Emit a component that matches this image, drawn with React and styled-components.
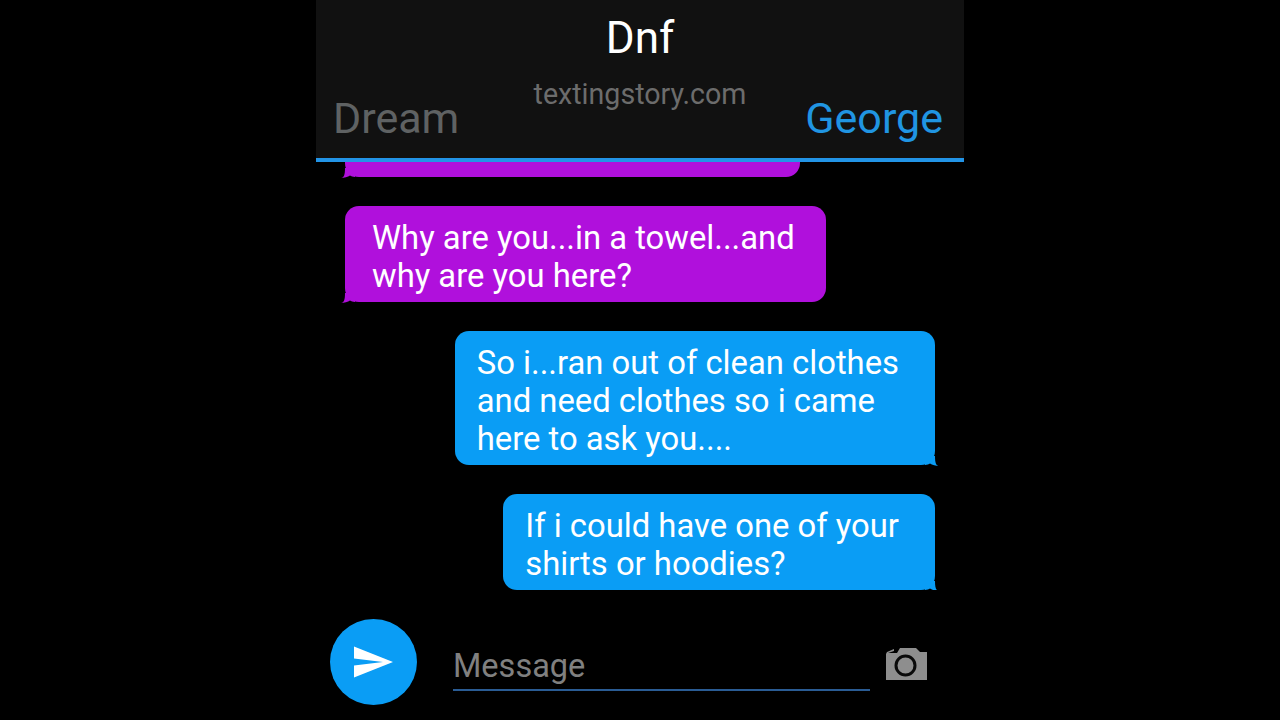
import styled, { createGlobalStyle } from 'styled-components';

const messages = [
  { id: 1, from: 'dream', width: 455, text: '' },
  { id: 2, from: 'dream', text: 'Why are you...in a towel...and\nwhy are you here?' },
  { id: 3, from: 'george', text: 'So i...ran out of clean clothes\nand need clothes so i came\nhere to ask you....' },
  { id: 4, from: 'george', text: 'If i could have one of your\nshirts or hoodies?' },
];

const SendIcon = () => (
  <svg width="41" height="32" viewBox="0 0 41 32">
    <path d="M1 0.500L40 16L1 31.500V19.500L30 16L1 12.500Z" fill="#fff" />
  </svg>
);

const CameraIcon = () => (
  <svg width="44" height="34" viewBox="0 0 44 34">
    <path d="M3 5L10 2V4L4 6H13L16 1H32L36 5H43V33H2V7Z" fill="#8e8e8e" />
    <circle cx="21.500" cy="18.500" r="9.500" fill="#8e8e8e" stroke="#0a0a0a" strokeWidth="3" />
  </svg>
);

const Tail = ({ side, color }) => (
  <TailShape $side={side} width="14" height="10" viewBox="0 0 14 10" fill={color}>
    <path
      d={
        side === 'left'
          ? 'M0 10C3 9.500 4 7 4 0H14V9C12 9 10 8 9 7.500C7 9 3 10 0 10Z'
          : 'M14 10C11 9.500 10 7 10 0H0V9C2 9 4 8 5 7.500C7 9 11 10 14 10Z'
      }
    />
  </TailShape>
);

const bubbleColors = { dream: '#b010dc', george: '#0a9df5' };

export default function App() {
  return (
    <>
      <GlobalStyle />
      <Phone>
        <Header>
          <Title>Dnf</Title>
          <Participants>
            <Name>Dream</Name>
            <Site>textingstory.com</Site>
            <Name $active>George</Name>
          </Participants>
        </Header>
        <Thread>
          {messages.map((m) => (
            <Bubble key={m.id} $from={m.from} style={m.width ? { width: m.width } : undefined}>
              {m.text}
              <Tail side={m.from === 'dream' ? 'left' : 'right'} color={bubbleColors[m.from]} />
            </Bubble>
          ))}
        </Thread>
        <Composer>
          <SendButton>
            <SendIcon />
          </SendButton>
          <MessageField>Message</MessageField>
          <CameraButton>
            <CameraIcon />
          </CameraButton>
        </Composer>
      </Phone>
    </>
  );
}

const GlobalStyle = createGlobalStyle`
  html, body {
    margin: 0;
    height: 100%;
    background: #000;
    overflow: hidden;
  }
  body {
    font-family: Roboto, "Liberation Sans", sans-serif;
  }
`;

const Phone = styled.div`
  width: 648px;
  height: 720px;
  margin: 0 auto;
  display: flex;
  flex-direction: column;
  background: #000;
`;

const Header = styled.header`
  flex: none;
  position: relative;
  z-index: 1;
  height: 158px;
  padding: 0 17px;
  background: #111;
  border-bottom: 4px solid #2294e6;
`;

const Title = styled.div`
  padding-top: 14px;
  height: 49px;
  text-align: center;
  font-size: 44px;
  line-height: 49px;
  color: #fff;
`;

const Participants = styled.div`
  display: grid;
  grid-template-columns: 1fr auto 1fr;
  margin-top: 15px;
`;

const Name = styled.div`
  padding-top: 17px;
  padding-right: ${({ $active }) => ($active ? '4px' : '0')};
  font-size: 43px;
  line-height: 47px;
  color: ${({ $active }) => ($active ? '#2095e2' : '#5f6263')};
  text-align: ${({ $active }) => ($active ? 'right' : 'left')};
`;

const Site = styled.div`
  font-size: 28.600px;
  line-height: 33px;
  color: #6c6c6c;
`;

const Thread = styled.main`
  flex: 1;
  min-height: 0;
  overflow: hidden;
  display: flex;
  flex-direction: column;
  justify-content: flex-end;
  align-items: flex-start;
  gap: 29px;
  padding: 0 29px;
`;

const Bubble = styled.div`
  flex: none;
  position: relative;
  box-sizing: border-box;
  min-height: 96px;
  padding: 13px ${({ $from }) => ($from === 'george' ? '36px' : '31px')} 7px
    ${({ $from }) => ($from === 'george' ? '22px' : '27px')};
  align-self: ${({ $from }) => ($from === 'george' ? 'flex-end' : 'flex-start')};
  background: ${({ $from }) => bubbleColors[$from]};
  color: #fff;
  border-radius: 14px;
  font-size: 32.800px;
  line-height: 38px;
  white-space: pre-line;
`;

const TailShape = styled.svg`
  position: absolute;
  bottom: -1px;
  ${({ $side }) => ($side === 'left' ? 'left: -4px;' : 'right: -4px;')}
`;

const Composer = styled.footer`
  flex: none;
  height: 130px;
  box-sizing: border-box;
  padding: 29px 36px 0 14px;
  display: flex;
  align-items: flex-start;
`;

const SendButton = styled.div`
  flex: none;
  width: 87px;
  height: 86px;
  border-radius: 50%;
  background: #0a9df5;
  display: flex;
  align-items: center;
  justify-content: center;
`;

const MessageField = styled.div`
  flex: 1;
  margin: 29px 0 0 36px;
  padding-bottom: 4px;
  border-bottom: 2px solid #2a5c94;
  font-size: 32.500px;
  line-height: 37px;
  color: #808080;
`;

const CameraButton = styled.div`
  flex: none;
  margin: 28px 0 0 14px;
  line-height: 0;
`;
